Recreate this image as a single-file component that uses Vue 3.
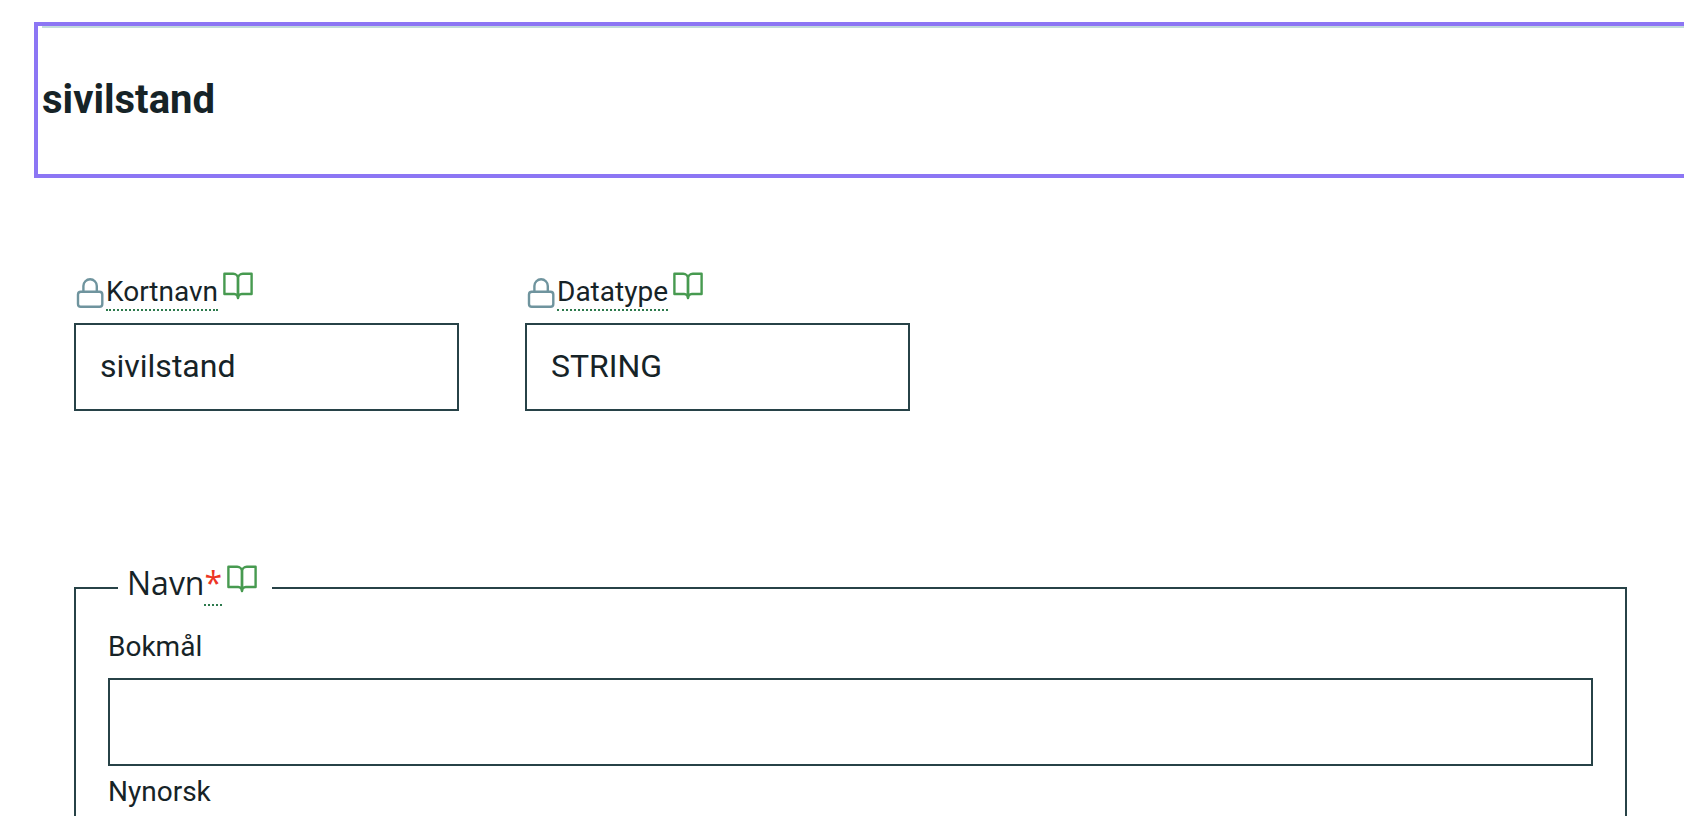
<template>
  <main class="variable-page">
    <header class="variable-header">
      <h1 tabindex="-1">{{ variable.shortName }}</h1>
    </header>

    <form class="variable-form" @submit.prevent>
      <div class="field-row">
        <div v-for="field in lockedFields" :key="field.id" class="field">
          <label :for="field.id" class="locked-label">
            <svg class="lock-icon" viewBox="0 0 32 32" aria-hidden="true">
              <rect x="4" y="15.8" width="24.3" height="15" rx="2.8" />
              <path d="M9.4 15.8V10a6.7 6.7 0 0 1 13.4 0v5.8" />
            </svg>
            <span class="term">{{ field.label }}</span>
            <svg class="book-icon" viewBox="0 0 32 32" aria-hidden="true">
              <path d="M2.4 3.8h8.8A4.8 4.8 0 0 1 16 8.4V28a3.8 3.8 0 0 0-3.8-4H2.4z" />
              <path d="M29.6 3.8h-8.8A4.8 4.8 0 0 0 16 8.4V28a3.8 3.8 0 0 1 3.8-4h9.8z" />
            </svg>
          </label>
          <input :id="field.id" type="text" :value="field.value" readonly>
        </div>
      </div>

      <fieldset>
        <legend>
          <span class="legend-text">Navn</span>
          <span class="required">*</span>
          <svg class="book-icon" viewBox="0 0 32 32" aria-hidden="true">
            <path d="M2.4 3.8h8.8A4.8 4.8 0 0 1 16 8.4V28a3.8 3.8 0 0 0-3.8-4H2.4z" />
            <path d="M29.6 3.8h-8.8A4.8 4.8 0 0 0 16 8.4V28a3.8 3.8 0 0 1 3.8-4h9.8z" />
          </svg>
        </legend>
        <div v-for="language in languages" :key="language.code" class="language-field">
          <label :for="`name-${language.code}`">{{ language.label }}</label>
          <input :id="`name-${language.code}`" v-model="variable.name[language.code]" type="text">
        </div>
      </fieldset>
    </form>
  </main>
</template>

<script setup>
import { computed, reactive } from 'vue'

const variable = reactive({
  shortName: 'sivilstand',
  dataType: 'STRING',
  name: { nb: '', nn: '' }
})

const lockedFields = computed(() => [
  { id: 'short-name', label: 'Kortnavn', value: variable.shortName },
  { id: 'data-type', label: 'Datatype', value: variable.dataType }
])

const languages = [
  { code: 'nb', label: 'Bokmål' },
  { code: 'nn', label: 'Nynorsk' }
]
</script>

<style>
body {
  margin: 0;
  background: #fff;
}
</style>

<style scoped>
.variable-page {
  box-sizing: border-box;
  height: 100vh;
  padding-top: 22px;
  overflow: hidden;
  color: #162327;
  font-family: Roboto, 'Liberation Sans', sans-serif;
}

.variable-header {
  margin: 0 -8px 0 34px;
  padding-left: 4px;
  border: 4px solid #8c76f4;
}

h1 {
  margin: 0;
  padding: 48px 0 50px;
  border-top: 2px solid #c3dcdc;
  outline: none;
  font-size: 40px;
  font-weight: 700;
  line-height: 48px;
}

.variable-form {
  padding: 92px 57px 0 74px;
}

.field-row {
  display: flex;
  gap: 66px;
}

.field {
  width: 385px;
}

label {
  display: block;
  font-size: 28px;
  line-height: 36px;
}

.locked-label {
  display: flex;
  align-items: flex-end;
  margin-bottom: 12px;
}

.term {
  border-bottom: 2px dotted #2d7a4d;
  line-height: 34px;
}

.lock-icon,
.book-icon {
  flex: none;
  width: 32px;
  height: 32px;
  fill: none;
  stroke-width: 2.4;
  stroke-linejoin: round;
}

.lock-icon {
  margin-bottom: 3px;
  stroke: #6f949e;
}

.book-icon {
  margin: 0 0 9px 4px;
  stroke: #479a50;
}

input {
  display: block;
  box-sizing: border-box;
  width: 100%;
  height: 88px;
  padding: 0 24px 2px;
  border: 2px solid #274247;
  border-radius: 0;
  background: #fff;
  color: inherit;
  font-family: inherit;
  font-size: 32px;
}

input:focus {
  outline: 4px solid #8c76f4;
}

fieldset {
  min-width: 0;
  margin: 152px 0 0;
  padding: 16px 32px 32px;
  border: 2px solid #274247;
}

legend {
  display: flex;
  align-items: flex-start;
  height: 50px;
  margin-left: 10px;
  padding: 0 14px 0 9px;
  font-family: 'Open Sans', 'Noto Sans', sans-serif;
  font-size: 32px;
  line-height: 39px;
}

.required {
  padding-bottom: 2px;
  border-bottom: 2px dotted #2d7a4d;
  color: #ed3524;
}

.language-field label {
  margin-bottom: 13px;
}

.language-field + .language-field {
  margin-top: 8px;
}
</style>
